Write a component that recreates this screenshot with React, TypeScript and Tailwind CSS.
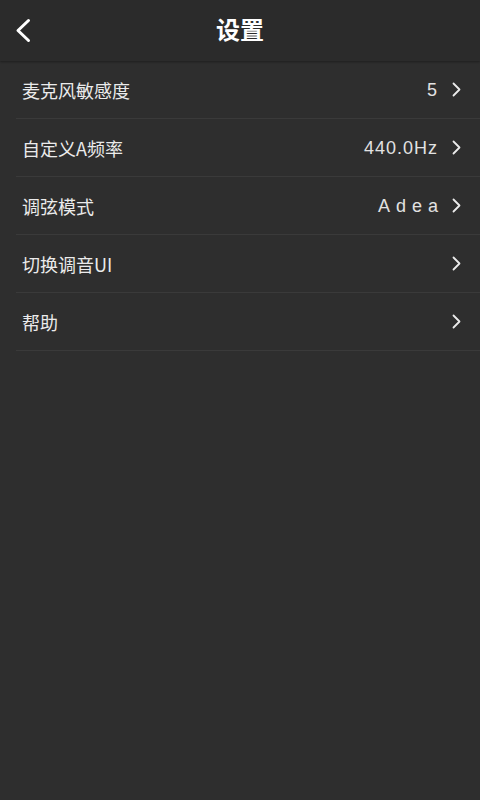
import * as React from 'react';

type Row = { label: string; value?: string; spaced?: boolean };

const rows: Row[] = [
  { label: '麦克风敏感度', value: '5' },
  { label: '自定义A频率', value: '440.0Hz' },
  { label: '调弦模式', value: 'Adea', spaced: true },
  { label: '切换调音UI' },
  { label: '帮助' },
];

function Chevron({ className = '' }: { className?: string }) {
  return (
    <svg viewBox="0 0 11 15" className={className} fill="none" stroke="currentColor" strokeWidth="1.8" strokeLinecap="round" strokeLinejoin="round">
      <path d="M2.5 1.5l6 6-6 6" />
    </svg>
  );
}

export default function App() {
  return (
    <div
      className="flex min-h-[800px] w-full flex-col bg-[#2e2e2e] text-[#ebebeb]"
      style={{ fontFamily: '"Noto Sans CJK SC", "Noto Sans", sans-serif' }}
    >
      <header className="relative flex h-[61px] items-center justify-center bg-[#2b2b2b] shadow-[0_1px_2px_rgba(0,0,0,0.35)]">
        <button className="absolute left-[15px] top-[18px] text-white">
          <svg viewBox="0 0 16 25" className="h-[25px] w-[16px]" fill="none" stroke="currentColor" strokeWidth="3" strokeLinecap="round" strokeLinejoin="round">
            <path d="M13.5 2.5L3 12.5l10.5 10" />
          </svg>
        </button>
        <h1 className="-mt-[4px] text-[24px] font-bold leading-none text-white">设置</h1>
      </header>

      <ul className="flex flex-col">
        {rows.map((r) => (
          <li key={r.label} className="ml-[16px] flex h-[58px] items-center border-b border-[#3a3a3a] pr-[18px]">
            <span className="ml-[6px] flex-1 text-[18px] leading-none">{r.label}</span>
            {r.value && (
              <span
                className={`text-[18px] leading-none text-[#e2e2e2] ${r.spaced ? '-mr-[6px] tracking-[6px]' : 'tracking-[1px]'}`}
                style={{ fontFamily: '"Liberation Sans", Arial, sans-serif' }}
              >
                {r.value}
              </span>
            )}
            <Chevron className="ml-[13px] h-[15px] w-[11px]" />
          </li>
        ))}
      </ul>
    </div>
  );
}
